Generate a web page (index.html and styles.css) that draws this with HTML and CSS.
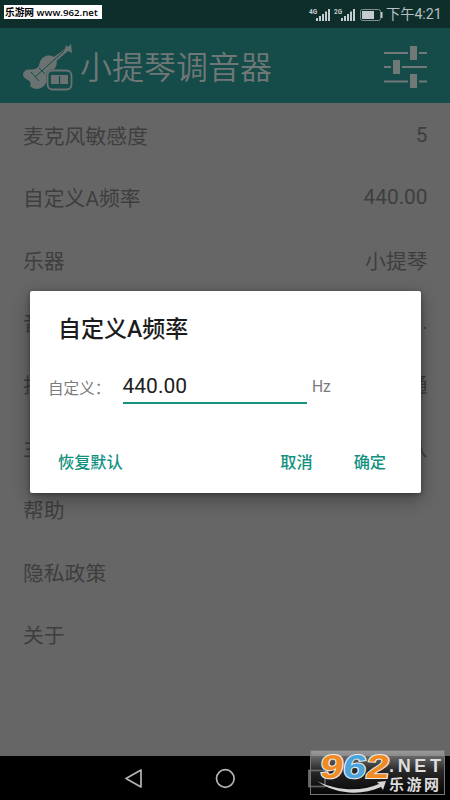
FILE: index.html
```html
<!DOCTYPE html>
<html lang="zh-CN">
<head>
<meta charset="utf-8">
<title>小提琴调音器</title>
<link rel="stylesheet" href="styles.css">
</head>
<body>
<div class="screen">
  <div class="status">
    <svg class="status-icons" width="76" height="18" viewBox="0 0 76 18">
      <g fill="#c3cdcb">
        <path d="M8 13h2v3H8zM11 11h2v5h-2zM14 9h2v7h-2zM17 6.500h2V16h-2zM20 4h2v12h-2zM33 13h2v3h-2zM36 11h2v5h-2zM39 9h2v7h-2zM42 6.500h2V16h-2zM45 4h2v12h-2z"/>
        <rect x="54" y="6" width="12" height="8"/><rect x="73" y="7" width="1.500" height="6"/>
      </g>
      <rect x="52.500" y="4.500" width="20" height="11" rx="2" fill="none" stroke="#82918f"/>
      <text class="net" x="1" y="8.500">4G</text><text class="net" x="26" y="8.500">2G</text>
    </svg>
    <span class="time">下午4:21</span>
  </div>
  <header class="bar">
    <svg class="logo" width="51" height="50" viewBox="0 0 51 50">
      <g fill="#6b7372">
        <path d="M29 17L43 7l1-4 2 2 3-3 1 9-4-2-14 12z"/>
        <path d="M18 20c2-6 9-8 14-5 3 3 4 7 1 11l-9 15c-3 6-11 8-16 3 2-3 0-5-4-7C0 34 0 31 4 28c4-1 8 0 11-2 2-1 2-4 3-6z"/>
      </g>
      <path d="M13 35L42 9M9 30l8 9M17 26l6 6" fill="none" stroke="#154b49" stroke-width="1"/>
      <rect x="24.500" y="27.500" width="26" height="21" rx="6" fill="#154b49"/>
      <rect x="25.500" y="28.500" width="24" height="19" rx="5" fill="none" stroke="#6b7372" stroke-width="1.800"/>
      <path d="M29 33h17v9H29z" fill="#6b7372"/><path d="M37.500 34v8" stroke="#154b49" stroke-width="1.200"/>
    </svg>
    <h1>小提琴调音器</h1>
    <svg class="sliders" width="44" height="44" viewBox="0 0 44 44" fill="#717978">
      <path d="M0 7h24v2H0zM26 1h7v14h-7zM35 7h8v2h-8zM0 21h7v2H0zM9 15h7v14H9zM18 21h25v2H18zM0 35.500h24v2H0zM26 29h7v14h-7zM35 35.500h8v2h-8z"/>
    </svg>
  </header>
  <main class="list">
    <div class="row"><span>麦克风敏感度</span><span>5</span></div>
    <div class="row"><span>自定义A频率</span><span>440.00</span></div>
    <div class="row"><span>乐器</span><span>小提琴</span></div>
    <div class="row"><span>音名</span><span>C D E ...</span></div>
    <div class="row"><span>指针</span><span>普通</span></div>
    <div class="row"><span>主题</span><span>默认</span></div>
    <div class="row"><span>帮助</span></div>
    <div class="row"><span>隐私政策</span></div>
    <div class="row"><span>关于</span></div>
  </main>
  <nav class="nav">
    <svg width="450" height="44" viewBox="0 0 450 44" fill="none" stroke="#b5b5b5" stroke-width="1.700">
      <path d="M141 14v17l-15-8.500z" stroke-linejoin="round"/><circle cx="225.300" cy="22.500" r="8.800"/><rect x="309" y="14.500" width="16" height="16" stroke="#777"/>
    </svg>
  </nav>
  <section class="dialog">
    <h2>自定义A频率</h2>
    <div class="field"><span class="label">自定义：</span><span class="input">440.00</span><span class="unit">Hz</span></div>
    <div class="actions"><span class="reset">恢复默认</span><span class="cancel">取消</span><span>确定</span></div>
  </section>
  <div class="site-tag">乐游网 www.962.net</div>
  <div class="site-logo">
    <svg width="135" height="45" viewBox="0 0 135 45">
      <g class="digits">
        <text transform="translate(9 28) skewX(-8)" textLength="23" lengthAdjust="spacingAndGlyphs" fill="#ef8b22">9</text>
        <text transform="translate(32 28) skewX(-8)" textLength="23" lengthAdjust="spacingAndGlyphs" fill="#4ba5dc">6</text>
        <text transform="translate(55 28) skewX(-8)" textLength="23" lengthAdjust="spacingAndGlyphs" fill="#ef8b22">2</text>
      </g>
      <path d="M7 31c20 10 44 11 62 3l-2-2 9-1-3 9-2-3C49 47 23 43 7 31z" fill="#d5d5d5"/>
      <text class="net-name" x="79" y="22" textLength="52">.NET</text>
      <text class="cn-name" x="79" y="40" textLength="50">乐游网</text>
    </svg>
  </div>
</div>
</body>
</html>
```
FILE: styles.css
```css
* { box-sizing: border-box; }
body { margin: 0; }
.screen {
  position: relative;
  width: 450px;
  height: 800px;
  overflow: hidden;
  display: flex;
  flex-direction: column;
  background: #666;
  font-family: Roboto, "Noto Sans CJK SC", sans-serif;
}
svg { display: block; flex: none; }
.status {
  height: 28px;
  flex: none;
  display: flex;
  justify-content: flex-end;
  align-items: center;
  gap: 2px;
  padding-right: 10px;
  background: #0e2e2c;
}
.status-icons { margin-top: -1px; }
.time { width: 54px; font-size: 14.2px; line-height: 30px; color: #b7c1c0; white-space: nowrap; }
.net { font: bold 6.5px Roboto, sans-serif; fill: #c3cdcb; }
.bar {
  height: 75px;
  flex: none;
  display: flex;
  align-items: center;
  padding: 0 22px;
  background: #154b49;
}
.logo { margin-top: 2px; }
.bar h1 { margin: 4px 0 0 7px; font-size: 32px; line-height: 48px; font-weight: 350; color: #707877; }
.sliders { margin-left: auto; margin-top: 2px; }
.list { flex: 1; padding: 0.6px 22.5px 0 23px; }
.row {
  height: 62.4px;
  display: flex;
  justify-content: space-between;
  align-items: center;
  font-size: 20.8px;
  font-weight: 400;
  color: #3e3e3e;
}
.nav { height: 44px; flex: none; background: #000; }
.dialog {
  position: absolute;
  left: 30px;
  top: 291px;
  width: 390.5px;
  height: 201.5px;
  padding-top: 23px;
  display: flex;
  flex-direction: column;
  border-radius: 2px;
  background: #fff;
  box-shadow: 0 6px 18px rgba(0, 0, 0, .35), 0 1px 4px rgba(0, 0, 0, .3);
}
.dialog h2 { margin: 0 0 0 28px; font-size: 23px; line-height: 32px; font-weight: 500; color: #1c1c1c; }
.field { display: flex; align-items: center; margin-top: 24px; padding-left: 18px; height: 34px; color: #7b7b7b; font-size: 15.6px; }
.label { width: 74.5px; white-space: nowrap; }
.input { width: 184.5px; height: 34px; border-bottom: 2px solid #17917f; font-size: 21px; line-height: 32px; color: #202020; }
.unit { margin-left: 5px; }
.actions { display: flex; margin: 47px 34.5px 0 28px; font-size: 16.2px; line-height: 24px; font-weight: 500; color: #139180; }
.reset { margin-right: auto; }
.cancel { margin-right: 41px; }
.site-tag {
  position: absolute;
  left: 4px;
  top: 5px;
  width: 98px;
  height: 14px;
  padding-left: 1px;
  background: #fff;
  color: #000;
  font: 600 9.7px/15px "Open Sans", "Noto Sans CJK SC", sans-serif;
  white-space: nowrap;
}
.site-logo {
  position: absolute;
  left: 310px;
  top: 750px;
  width: 135px;
  height: 45px;
  border: 1px solid #777;
  background: linear-gradient(rgba(170, 170, 170, .75), rgba(90, 90, 90, .45) 45%, rgba(20, 20, 20, .3));
}
.site-logo svg { margin: -1px; }
.digits { font: bold 33px "Liberation Sans", sans-serif; stroke: #eee; stroke-width: 2px; paint-order: stroke; }
.net-name { font: bold 18px "Liberation Sans", sans-serif; fill: #ddd; }
.cn-name { font: bold 15px "Noto Sans CJK SC", sans-serif; fill: #ddd; }
```
